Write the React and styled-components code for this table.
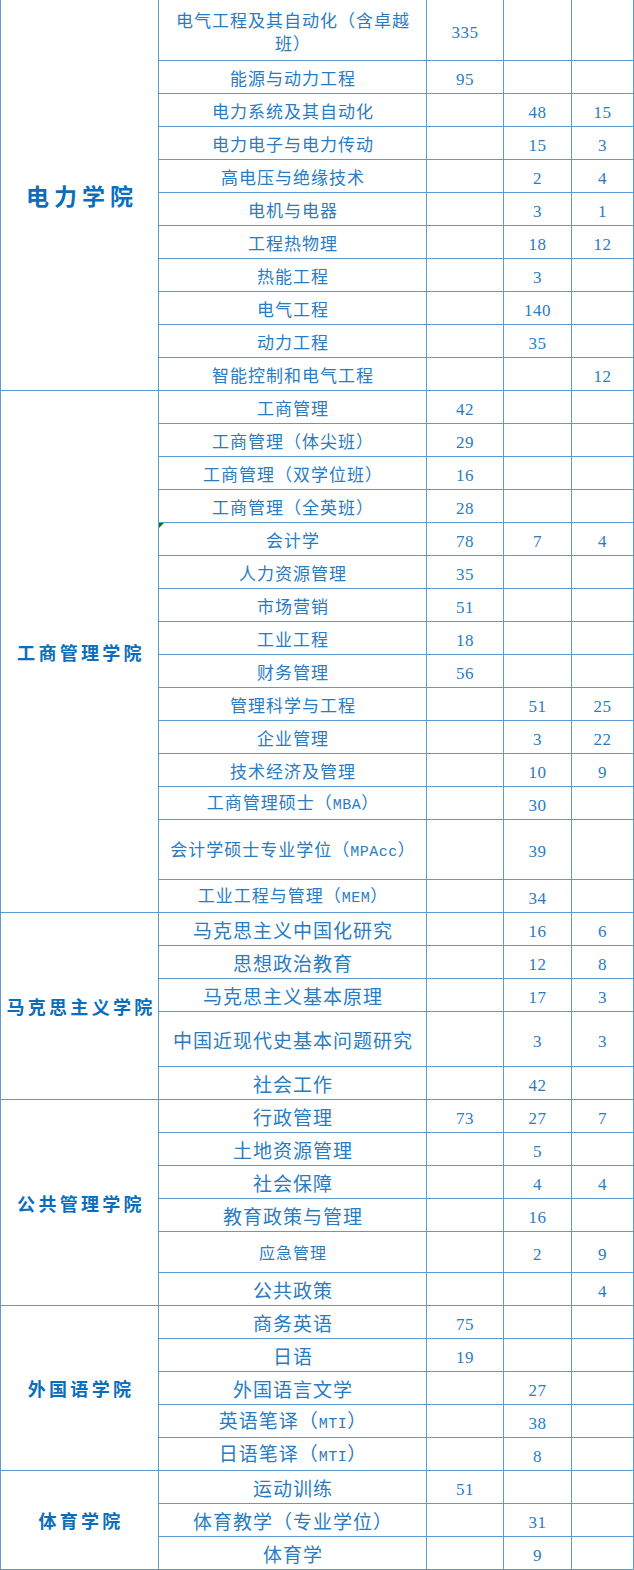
import React from "react";
import styled, { createGlobalStyle } from "styled-components";

const GlobalStyle = createGlobalStyle`
  html, body {
    margin: 0;
    padding: 0;
    background: #fff;
  }
`;

const Sheet = styled.div`
  display: grid;
  grid-template-columns: 157px 267px 76px 67px 61px;
  gap: 1px;
  padding: 0 1px 1px;
  width: 634px;
  box-sizing: border-box;
  background: #5b9bd5;
`;

const College = styled.div`
  grid-column: 1;
  grid-row: span ${(p) => p.$span};
  background: #fff;
  display: flex;
  align-items: center;
  justify-content: center;
  padding: 0 0 0 ${(p) => (p.$big ? 5 : 3)}px;
  font-family: "Noto Sans CJK SC", sans-serif;
  font-weight: 700;
  font-size: ${(p) => (p.$big ? 23 : 18)}px;
  letter-spacing: ${(p) => (p.$big ? 5 : 3.3)}px;
  color: #0a6ebd;
  white-space: nowrap;
`;

const Major = styled.div`
  position: relative;
  height: ${(p) => p.$h}px;
  box-sizing: border-box;
  background: #fff;
  display: flex;
  align-items: center;
  justify-content: center;
  text-align: center;
  padding: 1px 6px 0 7px;
  font-family: "Noto Sans CJK SC", sans-serif;
  font-size: ${(p) => p.$size}px;
  letter-spacing: 1px;
  line-height: 23px;
  color: #2a7cc2;

  ${(p) =>
    p.$mark &&
    `&::before {
      content: "";
      position: absolute;
      top: 0;
      left: 0;
      border-top: 5px solid #0b7a0b;
      border-right: 5px solid transparent;
    }`}
`;

const Latin = styled.span`
  font-family: "Liberation Mono", monospace;
  font-size: 15px;
  letter-spacing: 0.5px;
`;

const Num = styled.div`
  background: #fff;
  display: flex;
  align-items: center;
  justify-content: center;
  padding-top: 5px;
  font-family: "Liberation Serif", serif;
  font-size: 17px;
  letter-spacing: 0.5px;
  color: #2a7cc2;
`;

const colleges = [
  {
    name: "电力学院",
    big: true,
    size: 17,
    rows: [
      ["电气工程及其自动化（含卓越班）", "335", "", "", 60],
      ["能源与动力工程", "95", "", ""],
      ["电力系统及其自动化", "", "48", "15"],
      ["电力电子与电力传动", "", "15", "3"],
      ["高电压与绝缘技术", "", "2", "4"],
      ["电机与电器", "", "3", "1"],
      ["工程热物理", "", "18", "12"],
      ["热能工程", "", "3", ""],
      ["电气工程", "", "140", ""],
      ["动力工程", "", "35", ""],
      ["智能控制和电气工程", "", "", "12"],
    ],
  },
  {
    name: "工商管理学院",
    size: 17,
    rows: [
      ["工商管理", "42", "", ""],
      ["工商管理（体尖班）", "29", "", ""],
      ["工商管理（双学位班）", "16", "", ""],
      ["工商管理（全英班）", "28", "", ""],
      ["会计学", "78", "7", "4", 32, true],
      ["人力资源管理", "35", "", ""],
      ["市场营销", "51", "", ""],
      ["工业工程", "18", "", ""],
      ["财务管理", "56", "", ""],
      ["管理科学与工程", "", "51", "25"],
      ["企业管理", "", "3", "22"],
      ["技术经济及管理", "", "10", "9"],
      ["工商管理硕士（MBA）", "", "30", ""],
      ["会计学硕士专业学位（MPAcc）", "", "39", "", 59],
      ["工业工程与管理（MEM）", "", "34", ""],
    ],
  },
  {
    name: "马克思主义学院",
    size: 19,
    rows: [
      ["马克思主义中国化研究", "", "16", "6"],
      ["思想政治教育", "", "12", "8"],
      ["马克思主义基本原理", "", "17", "3"],
      ["中国近现代史基本问题研究", "", "3", "3", 54],
      ["社会工作", "", "42", ""],
    ],
  },
  {
    name: "公共管理学院",
    size: 19,
    rows: [
      ["行政管理", "73", "27", "7"],
      ["土地资源管理", "", "5", ""],
      ["社会保障", "", "4", "4"],
      ["教育政策与管理", "", "16", ""],
      ["应急管理", "", "2", "9", 40, false, 16],
      ["公共政策", "", "", "4"],
    ],
  },
  {
    name: "外国语学院",
    size: 19,
    rows: [
      ["商务英语", "75", "", ""],
      ["日语", "19", "", ""],
      ["外国语言文学", "", "27", ""],
      ["英语笔译（MTI）", "", "38", ""],
      ["日语笔译（MTI）", "", "8", ""],
    ],
  },
  {
    name: "体育学院",
    size: 19,
    rows: [
      ["运动训练", "51", "", ""],
      ["体育教学（专业学位）", "", "31", ""],
      ["体育学", "", "9", ""],
    ],
  },
];

const MajorName = ({ text }) =>
  text.split(/([A-Za-z]+)/).map((part, i) =>
    /^[A-Za-z]+$/.test(part) ? <Latin key={i}>{part}</Latin> : part
  );

export default function App() {
  return (
    <>
      <GlobalStyle />
      <Sheet>
        {colleges.map((c) => (
          <React.Fragment key={c.name}>
            <College $span={c.rows.length} $big={c.big}>
              {c.name}
            </College>
            {c.rows.map(([major, a, b, d, h = 32, mark, size]) => (
              <React.Fragment key={major}>
                <Major $h={h} $size={size || c.size} $mark={mark}>
                  <span>
                    <MajorName text={major} />
                  </span>
                </Major>
                <Num>{a}</Num>
                <Num>{b}</Num>
                <Num>{d}</Num>
              </React.Fragment>
            ))}
          </React.Fragment>
        ))}
      </Sheet>
    </>
  );
}
